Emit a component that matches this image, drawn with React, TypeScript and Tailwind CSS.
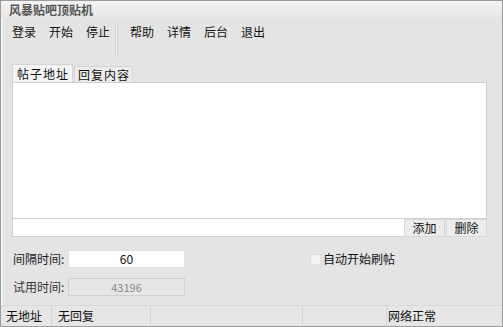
import React from "react";

const font = { fontFamily: '"Noto Sans CJK SC", "Noto Sans", sans-serif' };

export default function App() {
  const menuA = ["登录", "开始", "停止"];
  const menuB = ["帮助", "详情", "后台", "退出"];
  return (
    <div
      style={font}
      className="w-[503px] h-[327px] bg-[#e4e4e4] border border-[#9c9c9c] flex flex-col text-[12px] leading-none text-[#111] overflow-hidden"
    >
      {/* title bar */}
      <div className="h-[17px] shrink-0 bg-gradient-to-b from-[#f4f4f4] to-[#e6e6e6] pl-[8px] flex items-center">
        <span className="text-[12px] font-bold text-[#555]">风暴贴吧顶贴机</span>
      </div>
      <div className="flex-1 flex flex-col border-l-2 border-[#f2f2f2] pr-[14px] pl-[9px]">
        {/* menu */}
        <div className="h-[42px] shrink-0 flex items-start">
          <div className="flex gap-[13px] pt-[8px]">
            {menuA.map((m) => (
              <span key={m} className="text-[12px]">{m}</span>
            ))}
          </div>
          <div className="ml-[5px] mt-[4px] h-[34px] w-[3px] border-l border-r border-[#cfcfcf] bg-[#f4f4f4]" />
          <div className="flex gap-[13px] pt-[8px] ml-[12px]">
            {menuB.map((m) => (
              <span key={m} className="text-[12px]">{m}</span>
            ))}
          </div>
        </div>
        {/* tabs */}
        <div className="h-[22px] shrink-0 flex items-end">
          <div className="h-[18px] pl-[4px] pr-[3px] flex items-center bg-[#f4f4f4] border-t border-l border-r border-[#d4d4d4] text-[12px] tracking-[1px]">
            帖子地址
          </div>
          <div className="h-[16px] ml-[1px] pl-[3px] pr-[2px] flex items-center bg-[#ececec] border-t border-l border-r border-[#d4d4d4] text-[12px] tracking-[1px]">
            回复内容
          </div>
        </div>
        {/* panel */}
        <div className="h-[137px] shrink-0 bg-white border border-[#cfcfcf] mr-[1px]" />
        <div className="h-[18px] shrink-0 flex mr-[1px]">
          <div className="flex-1 bg-white border-l border-b border-[#d0d0d0]" />
          <div className="w-[41px] h-[18px] bg-[#ececec] border border-[#d8d8d8] flex items-center justify-center text-[12px]">
            添加
          </div>
          <div className="w-[41px] h-[18px] ml-[1px] bg-[#ececec] border border-[#d8d8d8] flex items-center justify-center text-[12px]">
            删除
          </div>
        </div>
        {/* form */}
        <div className="flex items-center mt-[13px] h-[18px] pl-[1px]">
          <span className="w-[55px] text-[12px] text-[#222]">间隔时间:</span>
          <div className="w-[117px] h-[18px] bg-white border border-[#e0e0e0] flex items-center justify-center text-[12px]">
            60
          </div>
          <div className="ml-[125px] w-[11px] h-[11px] bg-[#f2f2f2] border border-[#e0e0e0]" />
          <span className="ml-[2px] text-[12px]">自动开始刷帖</span>
        </div>
        <div className="flex items-center mt-[10px] h-[18px] pl-[1px]">
          <span className="w-[55px] text-[12px] text-[#333]">试用时间:</span>
          <div className="w-[117px] h-[18px] bg-[#e6e6e6] border border-[#d0d0d0] flex items-center justify-center text-[11px] text-[#888]">
            43196
          </div>
        </div>
        <div className="flex-1" />
      </div>
      {/* status bar */}
      <div className="h-[21px] shrink-0 bg-[#e6e6e6] border-t border-[#d8d8d8] flex items-center text-[12px]">
        <div className="w-[51px] pl-[5px] h-full flex items-center border-r border-[#d4d4d4]">无地址</div>
        <div className="w-[99px] pl-[6px] h-full flex items-center border-r border-[#d4d4d4]">无回复</div>
        <div className="w-[152px] h-full border-r border-[#d4d4d4]" />
        <div className="w-[84px] h-full border-r border-[#d4d4d4]" />
        <div className="flex-1 pl-[1px] h-full flex items-center">网络正常</div>
      </div>
    </div>
  );
}
